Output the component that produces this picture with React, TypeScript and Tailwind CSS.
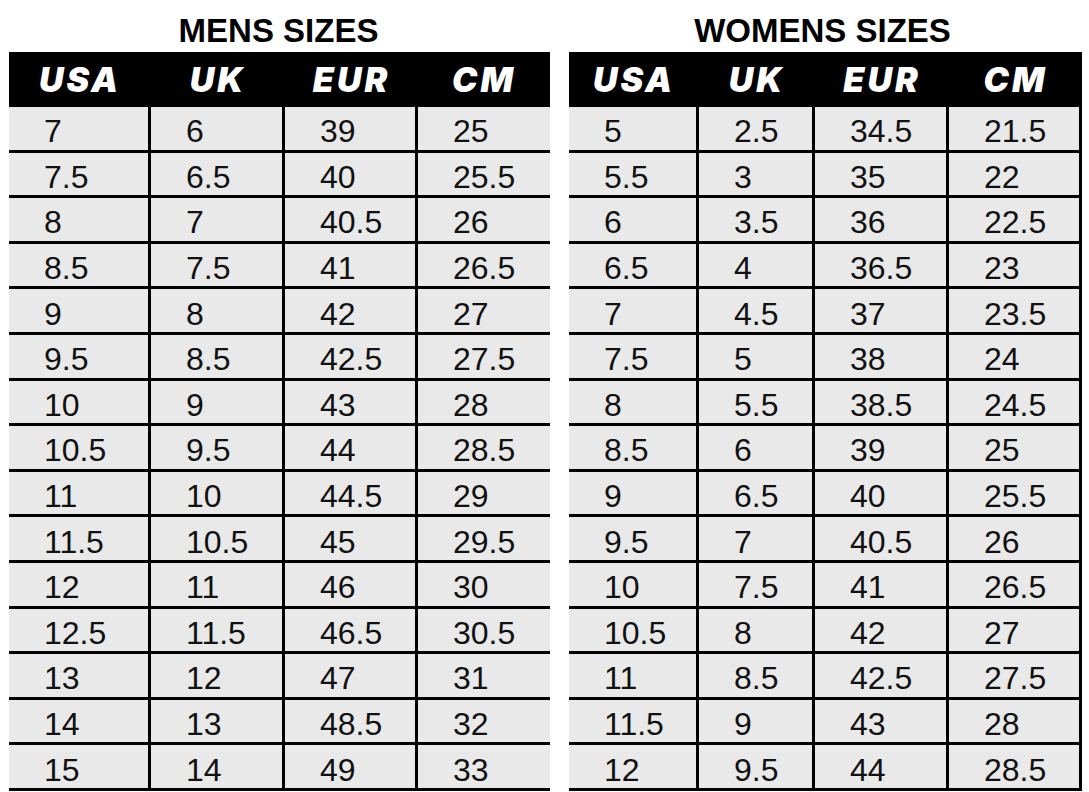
import React from 'react';

type SizeTable = {
  title: string;
  cols: string;
  rows: string[][];
  rightBorder: boolean;
};

const HEADERS = ['USA', 'UK', 'EUR', 'CM'];

const mens: SizeTable = {
  title: 'MENS SIZES',
  cols: 'grid-cols-[142px_134px_133px_132px]',
  rightBorder: false,
  rows: [
    ['7', '6', '39', '25'],
    ['7.5', '6.5', '40', '25.5'],
    ['8', '7', '40.5', '26'],
    ['8.5', '7.5', '41', '26.5'],
    ['9', '8', '42', '27'],
    ['9.5', '8.5', '42.5', '27.5'],
    ['10', '9', '43', '28'],
    ['10.5', '9.5', '44', '28.5'],
    ['11', '10', '44.5', '29'],
    ['11.5', '10.5', '45', '29.5'],
    ['12', '11', '46', '30'],
    ['12.5', '11.5', '46.5', '30.5'],
    ['13', '12', '47', '31'],
    ['14', '13', '48.5', '32'],
    ['15', '14', '49', '33'],
  ],
};

const womens: SizeTable = {
  title: 'WOMENS SIZES',
  cols: 'grid-cols-[130px_116px_134px_133px]',
  rightBorder: true,
  rows: [
    ['5', '2.5', '34.5', '21.5'],
    ['5.5', '3', '35', '22'],
    ['6', '3.5', '36', '22.5'],
    ['6.5', '4', '36.5', '23'],
    ['7', '4.5', '37', '23.5'],
    ['7.5', '5', '38', '24'],
    ['8', '5.5', '38.5', '24.5'],
    ['8.5', '6', '39', '25'],
    ['9', '6.5', '40', '25.5'],
    ['9.5', '7', '40.5', '26'],
    ['10', '7.5', '41', '26.5'],
    ['10.5', '8', '42', '27'],
    ['11', '8.5', '42.5', '27.5'],
    ['11.5', '9', '43', '28'],
    ['12', '9.5', '44', '28.5'],
  ],
};

const SizeChart: React.FC<{ table: SizeTable; width: string; titleShift: string }> = ({ table, width, titleShift }) => (
  <div className={`flex flex-col ${width}`}>
    <div className={`h-[52px] pt-[14px] text-center text-[33px] leading-none font-bold text-black font-['Liberation_Sans',Arial,sans-serif] ${titleShift}`}>
      {table.title}
    </div>
    <div className={`grid ${table.cols} h-[55px] bg-black`}>
      {HEADERS.map((h) => (
        <div
          key={h}
          className="flex items-center justify-center text-white italic font-black text-[34px] tracking-[3px] font-['Inter',sans-serif]"
        >
          {h}
        </div>
      ))}
    </div>
    <div className="flex flex-col h-[684px]">
      {table.rows.map((row, i) => (
        <div key={i} className={`grid ${table.cols} flex-1 border-b-[3px] border-black`}>
          {row.map((v, j) => {
            const last = j === row.length - 1;
            const border = !last || table.rightBorder ? 'border-r-[3px] border-black' : '';
            return (
              <div
                key={j}
                className={`flex items-center pl-[35px] pt-[6px] bg-[#e9e9e9] text-[#111] text-[32px] leading-none font-['Liberation_Sans',Arial,sans-serif] ${border}`}
              >
                {v}
              </div>
            );
          })}
        </div>
      ))}
    </div>
  </div>
);

const App: React.FC = () => {
  return (
    <div className="w-[1089px] h-[792px] bg-white overflow-hidden flex pl-[9px] gap-[19px]">
      <SizeChart table={mens} width="w-[541px]" titleShift="pr-[2px]" />
      <SizeChart table={womens} width="w-[513px]" titleShift="pr-[6px]" />
    </div>
  );
};

export default App;
